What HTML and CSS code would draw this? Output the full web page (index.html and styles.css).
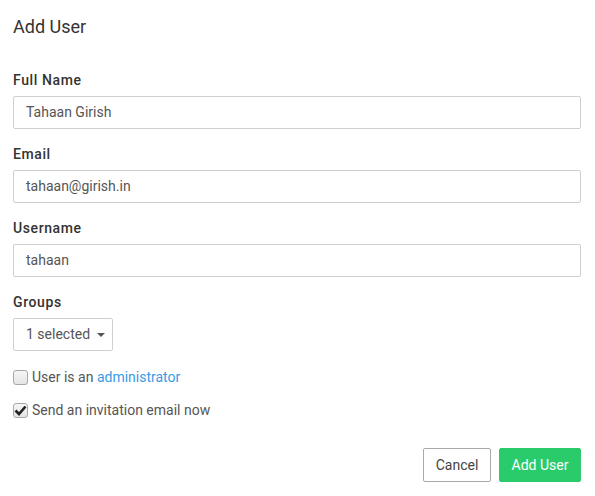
FILE: index.html
```html
<!DOCTYPE html>
<html>
<head>
<meta charset="utf-8">
<link rel="stylesheet" href="styles.css">
</head>
<body>
<div class="modal">
  <h1 class="title">Add User</h1>
  <div class="field first">
    <label class="label">Full Name</label>
    <div class="input">Tahaan Girish</div>
  </div>
  <div class="field">
    <label class="label">Email</label>
    <div class="input">tahaan@girish.in</div>
  </div>
  <div class="field">
    <label class="label">Username</label>
    <div class="input">tahaan</div>
  </div>
  <div class="field">
    <label class="label">Groups</label>
    <div class="select"><span>1 selected</span><span class="caret"></span></div>
  </div>
  <div class="check-row first-check">
    <span class="box"></span>
    <span class="check-text">User is an <a class="link">administrator</a></span>
  </div>
  <div class="check-row">
    <span class="box checked"><svg width="13" height="11" viewBox="0 0 13 11"><path d="M1.5 5.5 L5 9 L11.5 1.5" fill="none" stroke="#222" stroke-width="2.6" stroke-linecap="butt"/></svg></span>
    <span class="check-text">Send an invitation email now</span>
  </div>
  <div class="actions">
    <button class="btn btn-cancel">Cancel</button>
    <button class="btn btn-primary">Add User</button>
  </div>
</div>
</body>
</html>
```
FILE: styles.css
```css
html, body {
  margin: 0;
  padding: 0;
  background: #fff;
}
body {
  font-family: Roboto, "Liberation Sans", sans-serif;
  color: #555;
}
.modal {
  padding: 13px 14px 0 13px;
  display: flex;
  flex-direction: column;
}
.title {
  margin: 0;
  font-size: 18px;
  line-height: 28px;
  font-weight: 400;
  color: #333;
}
.field {
  display: flex;
  flex-direction: column;
  margin-top: 15px;
}
.field.first {
  margin-top: 29px;
}
.label {
  font-size: 14px;
  line-height: 20px;
  font-weight: 500;
  letter-spacing: 0.6px;
  color: #333;
  margin-bottom: 6px;
}
.input {
  height: 33px;
  box-sizing: border-box;
  border: 1px solid #cfcfcf;
  border-radius: 2px;
  padding: 0 12px;
  font-size: 14px;
  line-height: 31px;
  color: #555;
  white-space: nowrap;
}
.select {
  align-self: flex-start;
  width: 100px;
  height: 33px;
  box-sizing: border-box;
  border: 1px solid #cfcfcf;
  border-radius: 2px;
  padding: 0 12px;
  font-size: 14px;
  line-height: 31px;
  color: #555;
  white-space: nowrap;
  display: flex;
  align-items: center;
  gap: 7px;
}
.caret {
  flex: none;
  width: 0;
  height: 0;
  border-left: 4px solid transparent;
  border-right: 4px solid transparent;
  border-top: 4px solid #555;
  margin-top: 1px;
}
.check-row {
  display: flex;
  align-items: center;
  gap: 4px;
  margin-top: 17px;
  height: 16px;
  font-size: 14px;
  color: #555;
  white-space: nowrap;
}
.check-row.first-check {
  margin-top: 18px;
}
.box {
  flex: none;
  width: 15px;
  height: 15px;
  box-sizing: border-box;
  border: 1px solid #a8a8a8;
  border-radius: 3px;
  background: linear-gradient(#f6f6f6, #e4e4e4);
  display: flex;
  align-items: center;
  justify-content: center;
}
.box svg {
  display: block;
}
.link {
  color: #3a9be5;
  text-decoration: none;
}
.actions {
  display: flex;
  justify-content: flex-end;
  gap: 8px;
  margin-top: 30px;
}
.btn {
  height: 34px;
  box-sizing: border-box;
  border-radius: 2px;
  font-family: Roboto, "Liberation Sans", sans-serif;
  font-size: 14px;
  padding: 0;
  white-space: nowrap;
  cursor: pointer;
}
.btn-cancel {
  width: 68px;
  background: #fff;
  border: 1px solid #a9a9a9;
  color: #444;
}
.btn-primary {
  width: 82px;
  background: #2acb6b;
  border: 1px solid #2acb6b;
  color: #fff;
}
```
